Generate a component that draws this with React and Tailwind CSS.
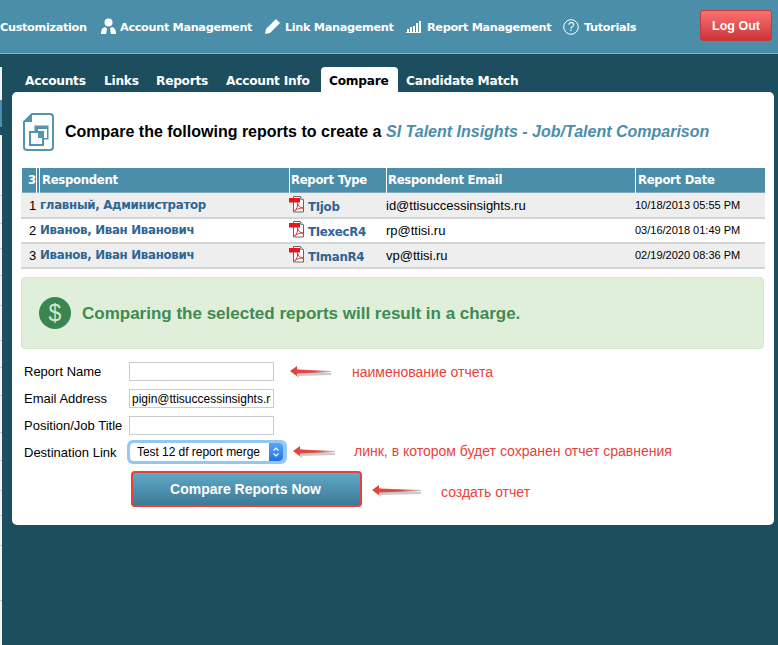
const nav = "[font-family:DejaVu_Sans,Verdana,sans-serif] font-bold text-white text-[11.300px] tracking-[-0.350px] leading-none absolute whitespace-nowrap";
const arial = "[font-family:Liberation_Sans,Arial,sans-serif]";

function Pdf({ x, y }) {
  return (
    <svg className="absolute" style={{ left: x, top: y }} width="16" height="17" viewBox="0 0 16 17">
      <path d="M4.500 .5h7l3 3v12.500h-10z" fill="#fff" stroke="#666" strokeWidth="1" />
      <path d="M11.500 .5v3h3" fill="#ddd" stroke="#888" strokeWidth="1" />
      <rect x="0" y="2" width="11" height="4.500" fill="#e8151c" />
      <path d="M5.500 15c2.500-2 3.500-5 3-8.500 .5 3.500 2 5 5.500 5.500-3.500 0-6 1-8.500 3z" fill="none" stroke="#e2343a" strokeWidth="1" />
    </svg>
  );
}

function Arrow({ x, y, w }) {
  return (
    <svg className="absolute" style={{ left: x, top: y }} width={w} height="14" viewBox={`0 0 ${w} 14`}>
      <defs>
        <linearGradient id={`a${x}${y}`} x1="0" x2="1" y1="0" y2="0">
          <stop offset="0" stopColor="#e5403a" />
          <stop offset="0.6" stopColor="#d9534d" />
          <stop offset="1" stopColor="#c4c4c4" />
        </linearGradient>
      </defs>
      <path d={`M2 8l7-5v3l${w - 9} 2v2l-${w - 9} 1v2z`} fill="#b5b5b5" opacity="0.7" />
      <path d={`M0 6l7-5v3.500l${w - 7} 1.500v1l-${w - 7} 1.500v2.500z`} fill={`url(#a${x}${y})`} />
    </svg>
  );
}

function Row({ n, name, type, email, date, y, gray, dateX = 635 }) {
  return (
    <div className={`absolute left-[21px] w-[744px] h-[25px] border-b-[2px] border-[#d4d4d4] ${gray ? "bg-[#eeeeee]" : "bg-white"}`} style={{ top: y }}>
      <span className={`${arial} absolute left-[8px] top-[4px] text-[13px] leading-[16px] text-black`}>{n}</span>
      <span className={`${nav} !text-[#2f6593] !text-[11.800px] !tracking-[-0.300px] left-[19px] top-[6px]`}>{name}</span>
      <span className={`${nav} !text-[#2f6593] !text-[11.800px] !tracking-[-0.300px] left-[287px] top-[8px]`}>{type}</span>
      <span className={`${arial} absolute left-[365px] top-[4px] text-[13px] leading-[16px] text-black`}>{email}</span>
      <span className={`${arial} absolute top-[4px] text-[11px] leading-[14px] text-black`} style={{ left: dateX - 21 }}>{date}</span>
      <Pdf x={268} y={2} />
    </div>
  );
}

function Field({ y, label, value }) {
  return (
    <>
      <span className={`${arial} absolute left-[24px] text-[13px] leading-[16px] text-black`} style={{ top: y + 2 }}>{label}</span>
      <input
        readOnly
        value={value}
        className={`${arial} absolute left-[129px] w-[145px] h-[19px] border border-[#cccccc] bg-white px-[2px] text-[12px] text-black outline-none`}
        style={{ top: y }}
      />
    </>
  );
}

export default function App() {
  const tabs = [
    ["Accounts", 25], ["Links", 104], ["Reports", 156], ["Account Info", 226], ["Candidate Match", 406],
  ];
  const lines = [195, 223, 248, 275, 305, 340, 367, 395, 432, 460, 490, 515, 545, 600];
  return (
    <div className="relative w-[778px] h-[645px] overflow-hidden bg-[#1d4e60]">
      {/* header */}
      <div className="absolute left-0 top-0 w-full h-[54px] bg-[#4a8ea9] border-b border-[#82b3c8]">
        <span className={`${nav} left-[0px] top-[22px]`}>Customization</span>
        <svg className="absolute left-[100px] top-[18px]" width="17" height="17" viewBox="0 0 17 17" fill="#fff">
          <circle cx="8.500" cy="4.500" r="4" />
          <path d="M1 16c0-4 1-6 4-7l2 1.500-.8 5.500zM16 16c0-4-1-6-4-7l-2 1.500.8 5.500z" />
        </svg>
        <span className={`${nav} left-[120px] top-[22px]`}>Account Management</span>
        <svg className="absolute left-[264px] top-[18px]" width="17" height="17" viewBox="0 0 17 17" fill="#fff">
          <path d="M1 16l1-5L12 1l4 4L6 15z" />
        </svg>
        <span className={`${nav} left-[285px] top-[22px]`}>Link Management</span>
        <svg className="absolute left-[406px] top-[20px]" width="15" height="13" viewBox="0 0 15 13" fill="#fff">
          <rect x="1" y="9" width="2" height="3" />
          <rect x="4" y="7" width="2" height="5" />
          <rect x="7" y="6" width="2" height="6" />
          <rect x="10" y="3" width="2" height="9" />
          <rect x="13" y="1" width="2" height="11" />
          <rect x="0" y="12" width="15" height="1" />
        </svg>
        <span className={`${nav} left-[427px] top-[22px]`}>Report Management</span>
        <svg className="absolute left-[563px] top-[19px]" width="16" height="16" viewBox="0 0 16 16">
          <circle cx="8" cy="8" r="7.300" fill="none" stroke="#fff" strokeWidth="1" />
          <text x="8" y="12.300" textAnchor="middle" fill="#fff" fontSize="12" fontFamily="Liberation Sans">?</text>
        </svg>
        <span className={`${nav} left-[584px] top-[22px]`}>Tutorials</span>
        <button className={`${arial} absolute left-[700px] top-[10px] w-[72px] h-[31px] rounded-[3px] border border-[#c9393e] bg-gradient-to-b from-[#fb7171] to-[#cc3339] text-white font-bold text-[12.500px] pt-[1px]`}>
          Log Out
        </button>
      </div>

      {/* left strip */}
      <div className="absolute left-0 top-[67px] w-[2px] h-[578px] bg-[#f2f2f2]" />
      <div className="absolute left-0 top-[100px] w-[2px] h-[27px] bg-[#4a8ea9]" />
      <div className="absolute left-0 top-[127px] w-[2px] h-[8px] bg-[#1d4e60]" />
      {lines.map((y) => (
        <div key={y} className="absolute left-0 w-[2px] h-px bg-[#c8c8c8]" style={{ top: y }} />
      ))}

      {/* tabs */}
      {tabs.map(([t, x]) => (
        <span key={t} className={`${nav} top-[75px] !text-[12.200px] !tracking-[-0.250px]`} style={{ left: x }}>{t}</span>
      ))}
      <div className="absolute left-[321px] top-[67px] w-[77px] h-[26px] bg-white rounded-t-[4px]">
        <span className={`${nav} !text-black !text-[12.200px] !tracking-[-0.250px] left-[8px] top-[8px]`}>Compare</span>
      </div>

      {/* panel */}
      <div className="absolute left-[12px] top-[92px] w-[762px] h-[433px] bg-white rounded-[5px]" />

      {/* title icon */}
      <svg className="absolute left-[23px] top-[113px]" width="31" height="38" viewBox="0 0 31 38">
        <path d="M9 1h18a3 3 0 0 1 3 3v30a3 3 0 0 1-3 3H4a3 3 0 0 1-3-3V9z" fill="#fff" stroke="#5594ae" strokeWidth="2" />
        <path d="M1 9h8V1z" fill="#5594ae" />
        <rect x="12" y="13" width="13" height="13" fill="#5594ae" stroke="#5594ae" />
        <rect x="15" y="16" width="9" height="9" fill="#fff" />
        <rect x="7" y="19" width="13" height="13" fill="#fff" stroke="#5594ae" strokeWidth="2" />
        <rect x="15" y="19" width="6" height="6" fill="#5594ae" />
      </svg>
      <span className={`${arial} absolute left-[65px] top-[122px] font-bold text-[16px] leading-[19px] text-black whitespace-nowrap`}>
        Compare the following reports to create a
      </span>
      <span className={`${arial} absolute left-[386px] top-[122px] font-bold italic text-[16px] leading-[19px] text-[#4a8ea9] whitespace-nowrap`}>
        SI Talent Insights - Job/Talent Comparison
      </span>

      {/* table header */}
      <div className="absolute left-[22px] top-[168px] w-[743px] h-[25px] bg-[#4a8ea9] border-b border-[#7fa9ba]" />
      {[36, 39, 289, 386, 635].map((x) => (
        <div key={x} className="absolute top-[168px] w-px h-[25px] bg-white" style={{ left: x }} />
      ))}
      {[["3", 28], ["Respondent", 42], ["Report Type", 291], ["Respondent Email", 388], ["Report Date", 638]].map(([t, x]) => (
        <span key={t} className={`${nav} top-[175px] !text-[11.700px] !tracking-[-0.300px]`} style={{ left: x }}>{t}</span>
      ))}

      <div className="absolute left-[21px] top-[193px] w-[744px] h-[2px] bg-[#eeeeee]" />
      <Row y={194} gray n="1" name="главный, Администратор" type="TIjob" email="id@ttisuccessinsights.ru" date="10/18/2013 05:55 PM" />
      <Row y={219} n="2" name="Иванов, Иван Иванович" type="TIexecR4" email="rp@ttisi.ru" date="03/16/2018 01:49 PM" />
      <Row y={244} gray n="3" name="Иванов,  Иван Иванович" type="TImanR4" email="vp@ttisi.ru" date="02/19/2020 08:36 PM" />

      {/* alert */}
      <div className="absolute left-[21px] top-[277px] w-[743px] h-[72px] bg-[#dfefd9] border border-[#d5e8cc] rounded-[4px]" />
      <div className="absolute left-[39px] top-[297px] w-[32px] h-[32px] rounded-full bg-[#3b8550] flex items-center justify-center">
        <span className={`${arial} text-[#cfe6d0] text-[23px] leading-none`}>$</span>
      </div>
      <span className={`${arial} absolute left-[82px] top-[304px] font-bold text-[17px] leading-[19px] text-[#408a54] whitespace-nowrap`}>
        Comparing the selected reports will result in a charge.
      </span>

      {/* form */}
      <Field y={362} label="Report Name" value="" />
      <Field y={389} label="Email Address" value="pigin@ttisuccessinsights.ru" />
      <Field y={416} label="Position/Job Title" value="" />
      <span className={`${arial} absolute left-[24px] top-[445px] text-[13px] leading-[16px] text-black`}>Destination Link</span>
      <div className="absolute left-[127px] top-[440px] w-[160px] h-[24px] rounded-[6px] bg-[#93c8f5]" />
      <div className={`${arial} absolute left-[130px] top-[443px] w-[153px] h-[18px] rounded-[4px] bg-white pl-[7px] text-[12px] tracking-[-0.050px] leading-[18px] text-black overflow-hidden whitespace-nowrap`}>
        Test 12 df report merge
      </div>
      <div className="absolute left-[269px] top-[443px] w-[14px] h-[18px] rounded-r-[4px] bg-gradient-to-b from-[#5aa6f5] to-[#1f73e8]">
        <svg width="14" height="18" viewBox="0 0 14 18" fill="none" stroke="#fff" strokeWidth="1.200">
          <path d="M4.500 7.500l2.500-2.500L9.500 7.500M4.500 10.500l2.500 2.500L9.500 10.500" />
        </svg>
      </div>
      <button className={`${arial} absolute left-[131px] top-[471px] w-[231px] h-[36px] rounded-[4px] border-[2px] border-[#e2443d] bg-gradient-to-b from-[#5fa9c8] to-[#3d7a96] text-white font-bold text-[14px] pr-[2px]`}>
        Compare Reports Now
      </button>

      {/* annotations */}
      <Arrow x={290} y={365} w={41} />
      <Arrow x={293} y={445} w={42} />
      <Arrow x={372} y={484} w={49} />
      <span className={`${arial} absolute left-[352px] top-[364px] text-[14px] leading-[17px] text-[#e8423b] whitespace-nowrap`}>наименование отчета</span>
      <span className={`${arial} absolute left-[354px] top-[443px] text-[14px] leading-[17px] text-[#e8423b] whitespace-nowrap`}>линк, в котором будет сохранен отчет сравнения</span>
      <span className={`${arial} absolute left-[441px] top-[484px] text-[14px] leading-[17px] text-[#e8423b] whitespace-nowrap`}>создать отчет</span>
    </div>
  );
}
